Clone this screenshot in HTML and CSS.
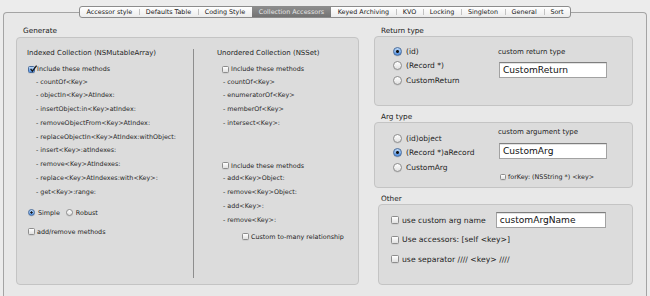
FILE: index.html
```html
<!DOCTYPE html>
<html lang="en">
<head>
    <meta charset="UTF-8">
    <meta name="viewport" content="width=device-width, initial-scale=1.0">
    <title>Collection Accessors</title>
    <link rel="stylesheet" href="styles.css">
</head>
<body>
    <div class="tabview">
        <div class="tabs">
            <div class="tab-strip">
                <div class="tab">Accessor style</div>
                <div class="tab">Defaults Table</div>
                <div class="tab">Coding Style</div>
                <div class="tab selected">Collection Accessors</div>
                <div class="tab">Keyed Archiving</div>
                <div class="tab">KVO</div>
                <div class="tab">Locking</div>
                <div class="tab">Singleton</div>
                <div class="tab">General</div>
                <div class="tab">Sort</div>
            </div>
        </div>

        <div class="tab-content">
            <!-- left: what to generate -->
            <div class="group generate">
                <div class="group-title">Generate</div>
                <div class="box gen-box">
                    <div class="gen-col gen-indexed">
                        <div class="gen-heading">Indexed Collection (NSMutableArray)</div>
                        <div class="mini-row first-include">
                            <span class="check mini on"><svg viewBox="0 0 8 8"><path d="M1.6 3.9 L3.4 6.2 L7.6 0.6" fill="none" stroke="#161616" stroke-width="1.3"/></svg></span>Include these methods
                        </div>
                        <ul class="methods">
                            <li>- countOf&lt;Key&gt;</li>
                            <li>- objectIn&lt;Key&gt;AtIndex:</li>
                            <li>- insertObject:in&lt;Key&gt;atIndex:</li>
                            <li>- removeObjectFrom&lt;Key&gt;AtIndex:</li>
                            <li>- replaceObjectIn&lt;Key&gt;AtIndex:withObject:</li>
                            <li>- insert&lt;Key&gt;:atIndexes:</li>
                            <li>- remove&lt;Key&gt;AtIndexes:</li>
                            <li>- replace&lt;Key&gt;AtIndexes:with&lt;Key&gt;:</li>
                            <li>- get&lt;Key&gt;:range:</li>
                        </ul>
                        <div class="mini-row style-row">
                            <span class="radio mini on"></span>Simple
                            <span class="radio mini robust"></span>Robust
                        </div>
                        <div class="mini-row add-remove">
                            <span class="check mini"></span>add/remove methods
                        </div>
                    </div>
                    <div class="gen-divider"></div>
                    <div class="gen-col gen-unordered">
                        <div class="gen-heading">Unordered Collection (NSSet)</div>
                        <div class="mini-row first-include">
                            <span class="check mini"></span>Include these methods
                        </div>
                        <ul class="methods">
                            <li>- countOf&lt;Key&gt;</li>
                            <li>- enumeratorOf&lt;Key&gt;</li>
                            <li>- memberOf&lt;Key&gt;</li>
                            <li>- intersect&lt;Key&gt;:</li>
                        </ul>
                        <div class="mini-row second-include">
                            <span class="check mini"></span>Include these methods
                        </div>
                        <ul class="methods">
                            <li>- add&lt;Key&gt;Object:</li>
                            <li>- remove&lt;Key&gt;Object:</li>
                            <li>- add&lt;Key&gt;:</li>
                            <li>- remove&lt;Key&gt;:</li>
                        </ul>
                        <div class="mini-row to-many">
                            <span class="check mini"></span>Custom to-many relationship
                        </div>
                    </div>
                </div>
            </div>

            <!-- right: types and options -->
            <div class="side">
                <div class="group">
                    <div class="group-title">Return type</div>
                    <div class="box type-box box-return">
                        <div class="radio-col">
                            <div class="radio-row"><span class="radio on"></span>(id)</div>
                            <div class="radio-row"><span class="radio"></span>(Record *)</div>
                            <div class="radio-row"><span class="radio"></span>CustomReturn</div>
                        </div>
                        <div class="side-col">
                            <div class="side-label">custom return type</div>
                            <div class="field">CustomReturn</div>
                        </div>
                    </div>
                </div>

                <div class="group">
                    <div class="group-title">Arg type</div>
                    <div class="box type-box box-arg">
                        <div class="radio-col">
                            <div class="radio-row"><span class="radio"></span>(id)object</div>
                            <div class="radio-row"><span class="radio on"></span>(Record *)aRecord</div>
                            <div class="radio-row"><span class="radio"></span>CustomArg</div>
                        </div>
                        <div class="side-col">
                            <div class="side-label">custom argument type</div>
                            <div class="field">CustomArg</div>
                            <div class="mini-row for-key">
                                <span class="check mini"></span>forKey: (NSString *) &lt;key&gt;
                            </div>
                        </div>
                    </div>
                </div>

                <div class="group">
                    <div class="group-title">Other</div>
                    <div class="box box-other">
                        <div class="other-row">
                            <span class="check"></span>use custom arg name
                            <div class="field arg-name">customArgName</div>
                        </div>
                        <div class="other-row"><span class="check"></span>Use accessors: [self &lt;key&gt;]</div>
                        <div class="other-row"><span class="check"></span>use separator //// &lt;key&gt; ////</div>
                    </div>
                </div>
            </div>
        </div>
    </div>
</body>
</html>
```

FILE: styles.css
```css
* {
    box-sizing: border-box;
}
body {
    margin: 0;
    height: 296px;
    overflow: hidden;
    background: #ececec;
    font-family: 'DejaVu Sans', sans-serif;
    color: #1c1c1c;
}

/* tab view */
.tabview {
    margin: 12px 3px 0;
    height: 284px;
    border: 1px solid #a4a4a4;
    border-bottom: none;
    border-radius: 4px 4px 0 0;
    background: #e8e8e8;
}
.tabs {
    display: flex;
    justify-content: center;
    margin-top: -7px;
}
.tab-strip {
    display: flex;
    height: 12px;
    border: 1px solid #8c8c8c;
    border-radius: 3px;
    background: linear-gradient(#ffffff, #ececec);
    overflow: hidden;
}
.tab {
    padding: 0 6.8px;
    font-size: 6.4px;
    line-height: 10px;
    white-space: nowrap;
    color: #161616;
}
.tab + .tab {
    background: linear-gradient(#c2c2c2, #c2c2c2) left center / 1px 6px no-repeat;
}
.tab.selected,
.tab.selected + .tab {
    background: none;
}
.tab.selected {
    background: linear-gradient(#8c8c8c, #737373);
    color: #e6e6e6;
}

.tab-content {
    display: flex;
    gap: 15px;
    padding: 8px 0 0 12px;
}

/* group boxes */
.group-title {
    height: 10px;
    padding-left: 7px;
    font-size: 7.3px;
    line-height: 10px;
    color: #222;
}
.box {
    background: #dcdcdc;
    border: 1px solid #c4c4c4;
    border-radius: 4px;
}

/* generate */
.generate {
    width: 343px;
}
.gen-box {
    display: flex;
    height: 248px;
    margin-top: 1px;
    padding: 10px 0 6px 10px;
}
.gen-indexed {
    width: 166px;
}
.gen-divider {
    width: 1px;
    margin-top: 1px;
    background: #8e8e8e;
}
.gen-unordered {
    padding-left: 23px;
}
.gen-heading {
    height: 10px;
    font-size: 7px;
    line-height: 10px;
    white-space: nowrap;
}
.mini-row {
    display: flex;
    align-items: center;
    height: 13px;
    font-size: 6.4px;
    white-space: nowrap;
}
.first-include {
    margin-top: 4.5px;
}
.gen-indexed .mini-row .check,
.gen-indexed .mini-row .radio {
    margin-left: 1px;
}
.gen-unordered .mini-row .check {
    margin-left: 5px;
}
.methods {
    list-style: none;
    margin: 0;
    padding: 0 0 0 9px;
}
.gen-unordered .methods {
    padding-left: 6px;
}
.methods li {
    height: 13.8px;
    font-size: 6.4px;
    line-height: 13.8px;
    white-space: nowrap;
    color: #2a2a2a;
}
.style-row {
    height: 14px;
    margin-top: 6.3px;
}
.style-row .radio.robust {
    margin-left: 6px !important;
}
.add-remove {
    height: 14px;
    margin-top: 5px;
}
.second-include {
    margin-top: 28.8px;
}
.to-many {
    margin-top: 2.8px;
}
.gen-unordered .to-many .check {
    margin-left: 25px;
}

/* controls */
.radio,
.check {
    flex: none;
    display: inline-flex;
    width: 9px;
    height: 9px;
    margin-right: 4px;
    border: 1px solid #8d8d8d;
    background: linear-gradient(#ffffff, #e0e0e0);
    box-shadow: 0 0.5px 0.5px rgba(0, 0, 0, 0.12);
}
.radio {
    border-radius: 50%;
}
.check {
    width: 8px;
    height: 8px;
    margin-right: 3px;
    border-radius: 1.5px;
}
.radio.on {
    border-color: #4a6d9c;
    background: radial-gradient(circle, #151515 0 1.2px, transparent 1.7px),
                linear-gradient(#bcd8f7, #4f8ddf);
}
.check.on {
    border-color: #4a6d9c;
    background: linear-gradient(#bcd8f7, #4f8ddf);
    overflow: visible;
}
.check svg {
    width: 8px;
    height: 8px;
    margin: -2px 0 0 0;
    overflow: visible;
}
.radio.mini,
.check.mini {
    width: 7px;
    height: 7px;
    margin-right: 2px;
}
.radio.mini.on {
    background: radial-gradient(circle, #151515 0 0.9px, transparent 1.3px),
                linear-gradient(#bcd8f7, #4f8ddf);
}
.style-row .radio.mini {
    margin-right: 3px;
}

/* right side */
.side {
    width: 259px;
    display: flex;
    flex-direction: column;
}
.group + .group {
    margin-top: 6px;
}
.type-box {
    display: flex;
    padding-left: 18px;
}
.box-return {
    height: 70px;
    padding-top: 7px;
}
.box-return .side-col {
    margin-top: 3px;
}
.box-arg {
    height: 66px;
    padding-top: 4px;
}
.box-arg .radio-col {
    padding-top: 4px;
}
.radio-col {
    width: 105px;
}
.radio-row {
    display: flex;
    align-items: center;
    height: 14.5px;
    font-size: 7.5px;
    white-space: nowrap;
}
.side-label {
    height: 10px;
    font-size: 7px;
    line-height: 10px;
    white-space: nowrap;
}
.field {
    width: 108px;
    height: 16px;
    margin: 5px 0 0 1px;
    padding-left: 3px;
    background: #fff;
    border: 1px solid #a2a2a2;
    border-top-color: #7e7e7e;
    box-shadow: inset 0 1px 0 #e2e2e2;
    font-size: 9.1px;
    line-height: 14px;
    color: #111;
    white-space: nowrap;
}
.box-arg .field {
    margin-top: 6px;
}
.for-key {
    height: 12px;
    margin-top: 12px;
}
.for-key .check {
    width: 6px;
    height: 6px;
    margin: 0 2px 0 2px;
}

.box-other {
    height: 81px;
    margin-left: 4px;
    padding: 7px 0 0 12px;
    display: flex;
    flex-direction: column;
    gap: 3.5px;
}
.other-row {
    display: flex;
    align-items: center;
    height: 16px;
    font-size: 7.7px;
    white-space: nowrap;
}
.field.arg-name {
    width: 110px;
    margin: 0 0 0 10px;
}
```
